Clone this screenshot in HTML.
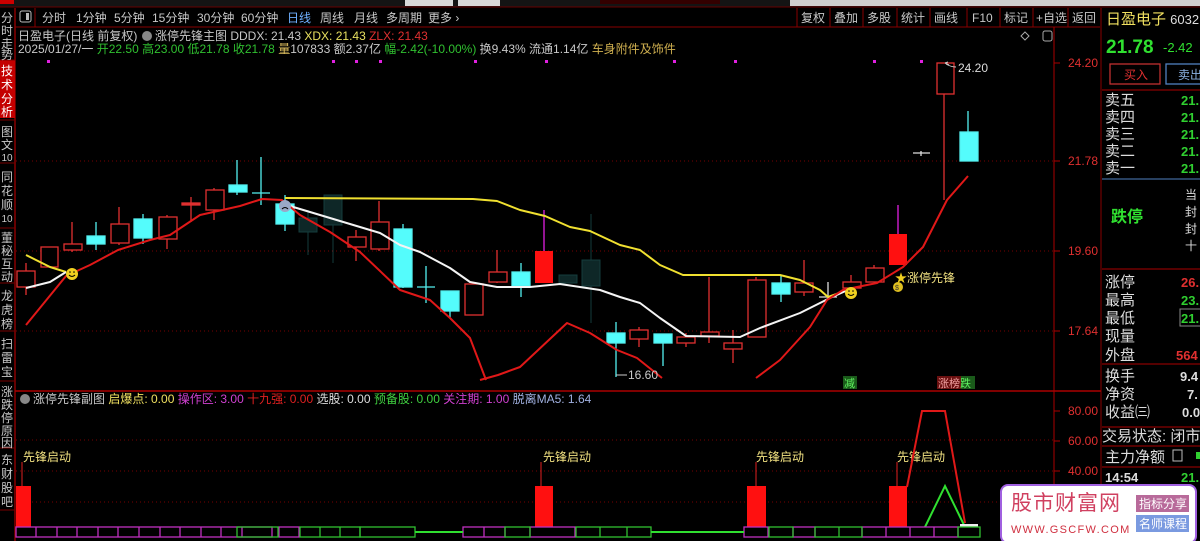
<!DOCTYPE html>
<html><head><meta charset="utf-8"><style>
html,body{margin:0;padding:0;background:#000;width:1200px;height:541px;overflow:hidden}
svg text{font-family:"Liberation Sans","Noto Sans CJK SC",sans-serif}
</style></head><body>
<svg width="1200" height="541" viewBox="0 0 1200 541" xmlns="http://www.w3.org/2000/svg">
<rect width="1200" height="541" fill="#000"/>
<rect x="0" y="0" width="1200" height="7" fill="#141414"/>
<rect x="0" y="0" width="14" height="4" fill="#c00"/>
<rect x="405" y="0" width="48" height="6" fill="#d8d8d8"/>
<rect x="458" y="0" width="42" height="6" fill="#d8d8d8"/>
<rect x="600" y="0" width="120" height="4" fill="#300"/>
<rect x="790" y="0" width="410" height="6" fill="#cfcfcf"/>
<line x1="0" y1="7" x2="1200" y2="7" stroke="#600" />
<rect x="0" y="8" width="15" height="533" fill="#000"/>
<line x1="15" y1="8" x2="15" y2="541" stroke="#800" stroke-width="1.5"/>
<rect x="0" y="60" width="15" height="58" fill="#c40000"/>
<g stroke="#700" stroke-width="1">
<line x1="0" y1="60" x2="15" y2="60"/><line x1="0" y1="120" x2="15" y2="120"/><line x1="0" y1="163" x2="15" y2="163"/><line x1="0" y1="228" x2="15" y2="228"/><line x1="0" y1="283" x2="15" y2="283"/><line x1="0" y1="331" x2="15" y2="331"/><line x1="0" y1="381" x2="15" y2="381"/><line x1="0" y1="448" x2="15" y2="448"/><line x1="0" y1="510" x2="15" y2="510"/>
</g>
<g fill="#c8c8c8" font-size="12" text-anchor="middle">
<text x="7" y="22">分</text><text x="7" y="35">时</text><text x="7" y="48">走</text><text x="7" y="59">势</text>
<g fill="#fff"><text x="7" y="75">技</text><text x="7" y="89">术</text><text x="7" y="103">分</text><text x="7" y="116">析</text></g>
<text x="7" y="136">图</text><text x="7" y="149">文</text><text x="7" y="161" font-size="10">10</text>
<text x="7" y="181">同</text><text x="7" y="195">花</text><text x="7" y="209">顺</text><text x="7" y="222" font-size="10">10</text>
<text x="7" y="242">董</text><text x="7" y="255">秘</text><text x="7" y="268">互</text><text x="7" y="281">动</text>
<text x="7" y="300">龙</text><text x="7" y="314">虎</text><text x="7" y="328">榜</text>
<text x="7" y="348">扫</text><text x="7" y="362">雷</text><text x="7" y="376">宝</text>
<text x="7" y="396">涨</text><text x="7" y="409">跌</text><text x="7" y="422">停</text><text x="7" y="435">原</text><text x="7" y="447">因</text>
<text x="7" y="464">东</text><text x="7" y="478">财</text><text x="7" y="492">股</text><text x="7" y="506">吧</text>
</g>
<line x1="15" y1="27" x2="1100" y2="27" stroke="#800"/>
<rect x="20" y="11" width="11" height="11" rx="2" fill="none" stroke="#bbb"/>
<rect x="26" y="13" width="3" height="7" fill="#bbb"/>
<line x1="35" y1="8" x2="35" y2="27" stroke="#800"/>
<g fill="#c8c8c8" font-size="12">
<text x="42" y="22">分时</text><text x="76" y="22">1分钟</text><text x="114" y="22">5分钟</text><text x="152" y="22">15分钟</text><text x="197" y="22">30分钟</text><text x="241" y="22">60分钟</text>
<text x="287" y="22" fill="#6fb0ff">日线</text><text x="320" y="22">周线</text><text x="354" y="22">月线</text><text x="386" y="22">多周期</text><text x="428" y="22">更多 ›</text>
</g>
<g stroke="#800"><line x1="797" y1="8" x2="797" y2="27"/><line x1="830" y1="8" x2="830" y2="27"/><line x1="863" y1="8" x2="863" y2="27"/><line x1="897" y1="8" x2="897" y2="27"/><line x1="930" y1="8" x2="930" y2="27"/><line x1="967" y1="8" x2="967" y2="27"/><line x1="1000" y1="8" x2="1000" y2="27"/><line x1="1033" y1="8" x2="1033" y2="27"/><line x1="1068" y1="8" x2="1068" y2="27"/><line x1="1101" y1="8" x2="1101" y2="541"/></g>
<g fill="#c8c8c8" font-size="12">
<text x="801" y="22">复权</text><text x="834" y="22">叠加</text><text x="867" y="22">多股</text><text x="901" y="22">统计</text><text x="934" y="22">画线</text><text x="972" y="22">F10</text><text x="1004" y="22">标记</text><text x="1036" y="22">+自选</text><text x="1072" y="22">返回</text>
</g>
<g font-size="12">
<text x="18" y="40" fill="#c8c8c8">日盈电子(日线 前复权)</text>
<circle cx="147" cy="36" r="5" fill="#888"/>
<text x="155" y="40" fill="#c8c8c8">涨停先锋主图 DDDX: 21.43 <tspan fill="#e8e060">XDX: 21.43</tspan> <tspan fill="#e03030">ZLX: 21.43</tspan></text>
<text x="18" y="53" fill="#c8c8c8">2025/01/27/一 <tspan fill="#30c030">开22.50 高23.00 低21.78 收21.78</tspan> <tspan fill="#e0c060">量</tspan>107833 额2.37亿 <tspan fill="#30c030">幅-2.42(-10.00%)</tspan> 换9.43% 流通1.14亿 <tspan fill="#d0b050">车身附件及饰件</tspan></text>
</g>
<path d="M1025 32 l4 4 -4 4 -4 -4z" fill="none" stroke="#aaa"/>
<rect x="1043" y="31" width="9" height="10" rx="2" fill="none" stroke="#aaa"/>
<line x1="1054" y1="27" x2="1054" y2="541" stroke="#a00"/>
<g stroke="#a00"><line x1="1054" y1="63" x2="1060" y2="63"/><line x1="1054" y1="161" x2="1060" y2="161"/><line x1="1054" y1="251" x2="1060" y2="251"/><line x1="1054" y1="331" x2="1060" y2="331"/><line x1="1054" y1="411" x2="1060" y2="411"/><line x1="1054" y1="441" x2="1060" y2="441"/><line x1="1054" y1="471" x2="1060" y2="471"/></g>
<g fill="#e03030" font-size="12"><text x="1068" y="67">24.20</text><text x="1068" y="165">21.78</text><text x="1068" y="255">19.60</text><text x="1068" y="335">17.64</text><text x="1068" y="415">80.00</text><text x="1068" y="445">60.00</text><text x="1068" y="475">40.00</text></g>
<g stroke="#700" stroke-dasharray="1,3"><line x1="16" y1="161" x2="1054" y2="161"/><line x1="16" y1="251" x2="1054" y2="251"/><line x1="16" y1="331" x2="1054" y2="331"/><line x1="16" y1="440" x2="1054" y2="440"/><line x1="16" y1="471" x2="1054" y2="471"/><line x1="16" y1="502" x2="1054" y2="502"/></g>
<line x1="15" y1="391" x2="1101" y2="391" stroke="#a00" stroke-width="1.5"/>
<g fill="#e020e0"><rect x="47" y="60" width="3" height="3"/><rect x="332" y="60" width="3" height="3"/><rect x="355" y="60" width="3" height="3"/><rect x="379" y="60" width="3" height="3"/><rect x="474" y="60" width="3" height="3"/><rect x="545" y="60" width="3" height="3"/><rect x="673" y="60" width="3" height="3"/><rect x="734" y="60" width="3" height="3"/><rect x="873" y="60" width="3" height="3"/><rect x="920" y="60" width="3" height="3"/></g>
<g stroke="#e03030" fill="#000" stroke-width="1.3">
<line x1="26" y1="263" x2="26" y2="295"/><rect x="17" y="271" width="18" height="16"/>
<line x1="49" y1="247" x2="49" y2="267"/><rect x="41" y="247" width="17" height="20"/>
<line x1="72" y1="222" x2="72" y2="252"/><rect x="64" y="244" width="18" height="6"/>
<line x1="119" y1="207" x2="119" y2="245"/><rect x="111" y="224" width="18" height="19"/>
<line x1="167" y1="215" x2="167" y2="249"/><rect x="159" y="217" width="18" height="22"/>
<line x1="191" y1="197" x2="191" y2="222"/><rect x="182" y="203" width="18" height="2" fill="#e03030"/>
<line x1="214" y1="188" x2="214" y2="220"/><rect x="206" y="190" width="18" height="20"/>
<line x1="356" y1="230" x2="356" y2="261"/><rect x="348" y="237" width="18" height="10"/>
<line x1="379" y1="201" x2="379" y2="251"/><rect x="371" y="222" width="18" height="27"/>
<rect x="465" y="284" width="18" height="31"/>
<line x1="497" y1="250" x2="497" y2="283"/><rect x="489" y="272" width="18" height="10"/>
<line x1="639" y1="327" x2="639" y2="347"/><rect x="630" y="330" width="18" height="9"/>
<line x1="686" y1="333" x2="686" y2="347"/><rect x="677" y="337" width="18" height="6"/>
<line x1="709" y1="277" x2="709" y2="343"/><rect x="701" y="332" width="18" height="4"/>
<line x1="733" y1="330" x2="733" y2="363"/><rect x="724" y="343" width="18" height="6"/>
<line x1="756" y1="277" x2="756" y2="337"/><rect x="748" y="280" width="18" height="57"/>
<line x1="804" y1="260" x2="804" y2="296"/><rect x="795" y="283" width="18" height="9"/>
<line x1="851" y1="275" x2="851" y2="290"/><rect x="843" y="282" width="18" height="6"/>
<line x1="874" y1="265" x2="874" y2="282"/><rect x="866" y="268" width="18" height="14"/>
<line x1="944" y1="94" x2="944" y2="200"/><rect x="937" y="63" width="17" height="31"/>
</g>
<g stroke="#e020e0" stroke-width="1.3"><line x1="544" y1="210" x2="544" y2="251"/><line x1="898" y1="205" x2="898" y2="234"/></g>
<rect x="535" y="251" width="18" height="32" fill="#ff1010"/>
<rect x="889" y="234" width="18" height="31" fill="#ff1010"/>
<g stroke="#54f0f0" stroke-width="1.3" fill="#54fcfc">
<line x1="96" y1="222" x2="96" y2="250"/><rect x="87" y="236" width="18" height="8"/>
<line x1="143" y1="214" x2="143" y2="244"/><rect x="134" y="219" width="18" height="19"/>
<line x1="237" y1="160" x2="237" y2="195"/><rect x="229" y="185" width="18" height="7"/>
<line x1="261" y1="157" x2="261" y2="205"/><line x1="252" y1="193" x2="270" y2="193"/>
<line x1="285" y1="195" x2="285" y2="231"/><rect x="276" y="204" width="18" height="20"/>
<line x1="403" y1="224" x2="403" y2="288"/><rect x="394" y="229" width="18" height="58"/>
<line x1="426" y1="266" x2="426" y2="303"/><line x1="417" y1="287" x2="435" y2="287"/>
<line x1="450" y1="291" x2="450" y2="318"/><rect x="441" y="291" width="18" height="20"/>
<line x1="521" y1="263" x2="521" y2="297"/><rect x="512" y="272" width="18" height="14"/>
<line x1="616" y1="322" x2="616" y2="377"/><rect x="607" y="333" width="18" height="10"/>
<line x1="663" y1="334" x2="663" y2="366"/><rect x="654" y="334" width="18" height="9"/>
<line x1="781" y1="276" x2="781" y2="302"/><rect x="772" y="283" width="18" height="11"/>
<line x1="968" y1="111" x2="968" y2="132"/><rect x="960" y="132" width="18" height="29"/>
</g>
<g opacity="0.25" stroke="#54f0f0" fill="#3a9a9a"><line x1="308" y1="210" x2="308" y2="255"/><rect x="299" y="218" width="18" height="14"/><line x1="333" y1="195" x2="333" y2="263"/><rect x="324" y="195" width="18" height="30"/><line x1="591" y1="214" x2="591" y2="323"/><rect x="582" y="260" width="18" height="26"/><rect x="559" y="275" width="18" height="8"/></g>
<g stroke="#ddd" stroke-width="1.3"><line x1="828" y1="282" x2="828" y2="298"/><line x1="819" y1="297" x2="837" y2="297"/><line x1="921" y1="151" x2="921" y2="156"/><line x1="913" y1="153" x2="930" y2="153"/></g>
<g fill="none" stroke-width="2" stroke-linejoin="round">
<polyline stroke="#f0e030" points="26,255 50,267 66,272"/>
<polyline stroke="#f0e030" points="285,198 473,199 497,201 520,210 545,216 570,227 590,231 620,245 640,250 660,265 683,275 780,275 800,280 820,290 828,297 845,291"/>
<polyline stroke="#f4f4f4" points="26,288 50,282 66,272"/>
<polyline stroke="#f4f4f4" points="290,206 320,215 350,224 380,233 400,245 420,252 450,268 470,282 497,287 530,287 560,284 600,290 620,297 640,303 660,318 686,336 740,337 760,328 800,313 830,298 850,289"/>
<polyline stroke="#e01818" points="26,325 66,276 90,265 118,250 150,240 170,235 200,215 240,206 262,199 282,200 300,215 330,232 360,252 400,290 430,300 450,318 470,338 486,380"/>
<polyline stroke="#e01818" points="480,380 498,375 520,367 567,323 590,333 617,350 637,358 662,378"/>
<polyline stroke="#e01818" points="756,378 780,360 810,327 827,300 843,290 857,287 877,283 903,267 923,247 947,200 968,176"/>
</g>
<circle cx="72" cy="274" r="6" fill="#f0d020"/><path d="M69 275 q3 3 6 0" stroke="#000" fill="none"/><circle cx="70" cy="272" r="0.8"/><circle cx="74" cy="272" r="0.8"/>
<circle cx="851" cy="293" r="6" fill="#f0d020"/><path d="M848 294 q3 3 6 0" stroke="#000" fill="none"/><circle cx="849" cy="291" r="0.8"/><circle cx="853" cy="291" r="0.8"/>
<circle cx="285" cy="206" r="6" fill="#9aa8c8"/><path d="M282 209 q3 -3 6 0" stroke="#000" fill="none"/>
<circle cx="898" cy="287" r="5" fill="#e0c020"/><text x="895" y="290" font-size="7" fill="#333">$</text>
<text x="895" y="282" font-size="12" fill="#f0d020">★<tspan fill="#f0e080">涨停先锋</tspan></text>
<path d="M945 63 l4 2 M945 63 l3 -1 M946 64 q5 3 10 3" stroke="#ccc" fill="none"/>
<text x="958" y="72" font-size="12" fill="#ddd">24.20</text>
<line x1="616" y1="375" x2="627" y2="375" stroke="#ccc"/><text x="628" y="379" font-size="12" fill="#ccc">16.60</text>
<rect x="843" y="376" width="14" height="13" fill="#1a5a1a"/><text x="844" y="387" font-size="11" fill="#60f060">减</text>
<rect x="937" y="376" width="24" height="13" fill="#6a1010"/><rect x="961" y="376" width="14" height="13" fill="#1a5a1a"/>
<text x="938" y="387" font-size="11" fill="#f0a0a0">涨榜<tspan fill="#60f060">跌</tspan></text>
<circle cx="25" cy="399" r="5" fill="#888"/>
<text x="33" y="403" font-size="12" fill="#c8c8c8">涨停先锋副图 <tspan fill="#f0e060">启爆点: 0.00</tspan> <tspan fill="#d040d0">操作区: 3.00</tspan> <tspan fill="#e02020">十九强: 0.00</tspan> <tspan fill="#ddd">选股: 0.00</tspan> <tspan fill="#40d040">预备股: 0.00</tspan> <tspan fill="#d040d0">关注期: 1.00</tspan> <tspan fill="#a0b0e0">脱离MA5: 1.64</tspan></text>
<g fill="#ff1010"><rect x="16" y="486" width="15" height="41"/><rect x="535" y="486" width="18" height="41"/><rect x="747" y="486" width="19" height="41"/><rect x="889" y="486" width="18" height="41"/></g>
<g stroke="#e02020"><line x1="22" y1="462" x2="22" y2="486"/><line x1="541" y1="462" x2="541" y2="486"/><line x1="756" y1="462" x2="756" y2="486"/><line x1="897" y1="462" x2="897" y2="486"/></g>
<g font-size="12" fill="#f0e080"><text x="23" y="461">先锋启动</text><text x="543" y="461">先锋启动</text><text x="756" y="461">先锋启动</text><text x="897" y="461">先锋启动</text></g>
<polyline points="907,487 922,411 945,411 965,523" fill="none" stroke="#e01818" stroke-width="2"/>
<polyline points="925,527 945,486 964,525" fill="none" stroke="#30e030" stroke-width="2"/>
<rect x="960" y="524" width="18" height="3" fill="#eee"/>
<g fill="none" stroke-width="1.3">
<g stroke="#c030c0"><rect x="16" y="527" width="256" height="10"/><line x1="36" y1="527" x2="36" y2="537"/><line x1="57" y1="527" x2="57" y2="537"/><line x1="77" y1="527" x2="77" y2="537"/><line x1="98" y1="527" x2="98" y2="537"/><line x1="118" y1="527" x2="118" y2="537"/><line x1="139" y1="527" x2="139" y2="537"/><line x1="160" y1="527" x2="160" y2="537"/><line x1="180" y1="527" x2="180" y2="537"/><line x1="201" y1="527" x2="201" y2="537"/><line x1="221" y1="527" x2="221" y2="537"/><line x1="242" y1="527" x2="242" y2="537"/><rect x="279" y="527" width="20" height="10"/><rect x="463" y="527" width="42" height="10"/><line x1="484" y1="527" x2="484" y2="537"/><rect x="744" y="527" width="24" height="10"/><rect x="793" y="527" width="22" height="10"/><rect x="862" y="527" width="96" height="10"/><line x1="886" y1="527" x2="886" y2="537"/><line x1="910" y1="527" x2="910" y2="537"/><line x1="934" y1="527" x2="934" y2="537"/><rect x="530" y="527" width="45" height="10"/></g>
<g stroke="#30c030"><rect x="237" y="527" width="41" height="10"/><rect x="300" y="527" width="60" height="10"/><line x1="320" y1="527" x2="320" y2="537"/><line x1="340" y1="527" x2="340" y2="537"/><rect x="360" y="527" width="55" height="10"/><rect x="505" y="527" width="25" height="10"/><rect x="576" y="527" width="75" height="10"/><line x1="600" y1="527" x2="600" y2="537"/><line x1="627" y1="527" x2="627" y2="537"/><rect x="769" y="527" width="24" height="10"/><rect x="815" y="527" width="47" height="10"/><line x1="839" y1="527" x2="839" y2="537"/><rect x="958" y="527" width="22" height="10"/></g>
<line x1="415" y1="532" x2="463" y2="532" stroke="#30e030" stroke-width="2"/><line x1="651" y1="532" x2="744" y2="532" stroke="#30e030" stroke-width="2"/>
</g>
<text x="1106" y="24" font-size="15" fill="#f0e060">日盈电子 <tspan fill="#ddd" font-size="13">6032</tspan></text>
<text x="1106" y="53" font-size="19" font-weight="bold" fill="#30e030">21.78</text>
<text x="1163" y="52" font-size="13" fill="#30e030">-2.42</text>
<rect x="1110" y="64" width="50" height="20" fill="none" stroke="#c03030" stroke-width="1.3"/><text x="1124" y="79" font-size="12" fill="#e03030">买入</text>
<rect x="1166" y="64" width="40" height="20" fill="none" stroke="#5080c0" stroke-width="1.3"/><text x="1178" y="79" font-size="12" fill="#8ab0e0">卖出</text>
<line x1="1102" y1="90" x2="1200" y2="90" stroke="#a00"/>
<g font-size="15" fill="#ddd"><text x="1105" y="105">卖五</text><text x="1105" y="122">卖四</text><text x="1105" y="139">卖三</text><text x="1105" y="156">卖二</text><text x="1105" y="173">卖一</text></g>
<g font-size="13" font-weight="bold" fill="#30d030"><text x="1181" y="105">21.</text><text x="1181" y="122">21.</text><text x="1181" y="139">21.</text><text x="1181" y="156">21.</text><text x="1181" y="173">21.</text></g>
<line x1="1102" y1="179" x2="1200" y2="179" stroke="#5080c0"/>
<text x="1111" y="222" font-size="16" font-weight="bold" fill="#30e030">跌停</text>
<g font-size="12" fill="#ddd"><text x="1185" y="199">当</text><text x="1185" y="216">封</text><text x="1185" y="233">封</text><text x="1185" y="250">十</text></g>
<line x1="1102" y1="269" x2="1200" y2="269" stroke="#a00"/>
<g font-size="15" fill="#ddd"><text x="1105" y="287">涨停</text><text x="1105" y="305">最高</text><text x="1105" y="323">最低</text><text x="1105" y="341">现量</text><text x="1105" y="360">外盘</text></g>
<g font-size="13" font-weight="bold"><text x="1181" y="287" fill="#e03030">26.</text><text x="1181" y="305" fill="#30d030">23.</text><text x="1181" y="323" fill="#30d030">21.</text><text x="1176" y="360" fill="#e03030">564</text></g>
<rect x="1180" y="309" width="22" height="17" fill="none" stroke="#888"/>
<line x1="1102" y1="364" x2="1200" y2="364" stroke="#a00"/>
<g font-size="15" fill="#ddd"><text x="1105" y="381">换手</text><text x="1105" y="399">净资</text><text x="1105" y="417">收益㈢</text><text x="1102" y="441">交易状态: 闭市</text><text x="1105" y="462">主力净额</text></g>
<g font-size="13" font-weight="bold" fill="#ddd"><text x="1180" y="381">9.4</text><text x="1187" y="399">7.</text><text x="1182" y="417">0.0</text><text x="1105" y="482">14:54</text></g>
<text x="1181" y="482" font-size="13" font-weight="bold" fill="#30d030">21.</text>
<line x1="1102" y1="427" x2="1200" y2="427" stroke="#a00"/><line x1="1102" y1="446" x2="1200" y2="446" stroke="#a00"/><line x1="1102" y1="467" x2="1200" y2="467" stroke="#a00"/>
<rect x="1173" y="450" width="9" height="11" fill="none" stroke="#bbb"/><rect x="1196" y="452" width="4" height="7" fill="#30d030"/>
<rect x="1001" y="485" width="195" height="58" rx="7" fill="#fff" stroke="#a060e0" stroke-width="2"/>
<text x="1011" y="510" font-size="21" fill="#d04060" letter-spacing="1">股市财富网</text>
<text x="1011" y="533" font-size="11" fill="#d03040" font-family="Liberation Serif,serif" letter-spacing="1.3">WWW.GSCFW.COM</text>
<rect x="1136" y="495" width="53" height="17" fill="#b86a9a"/><text x="1139" y="508" font-size="12" fill="#fff">指标分享</text>
<rect x="1136" y="515" width="53" height="17" fill="#7a9ae0"/><text x="1139" y="528" font-size="12" fill="#fff">名师课程</text>
</svg>
</body></html>
